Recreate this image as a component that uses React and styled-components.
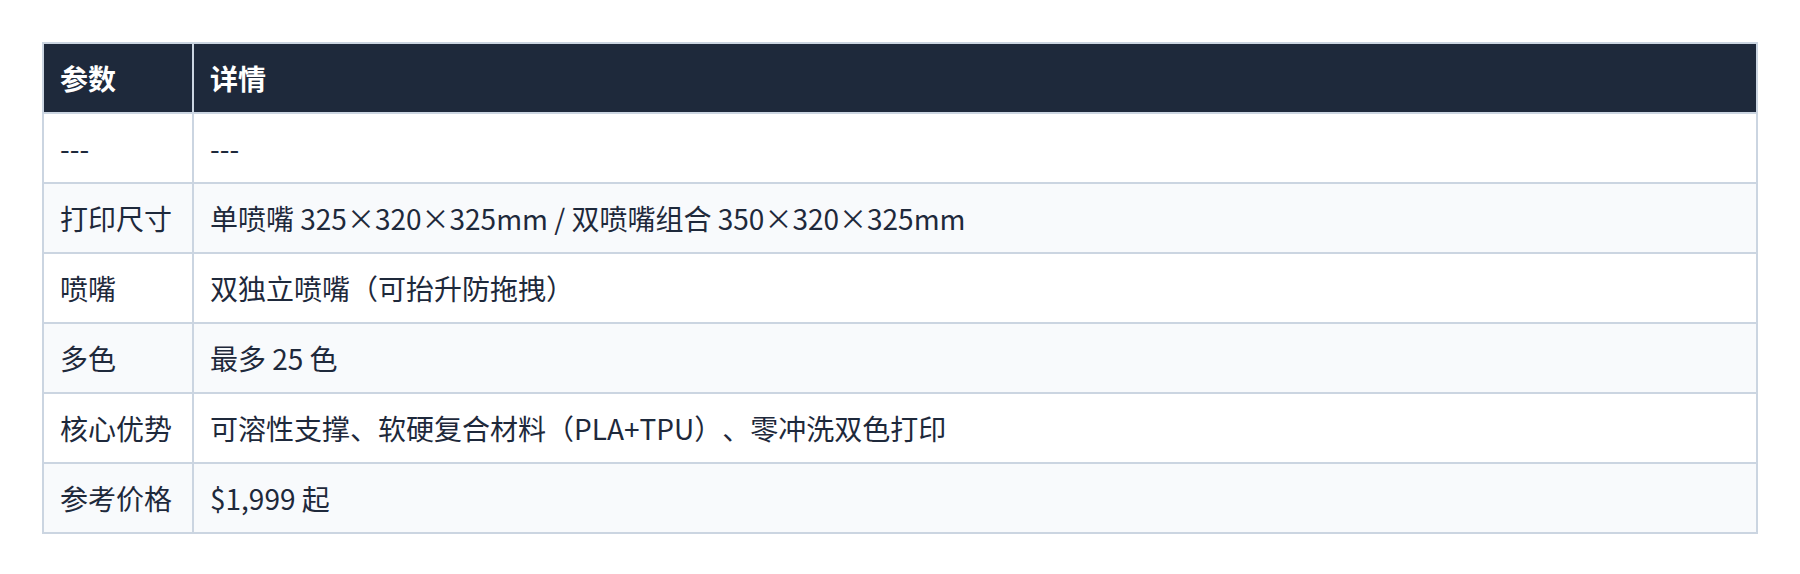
//Libraries
import React from 'react'
import styled, { createGlobalStyle } from 'styled-components'


const GlobalStyle = createGlobalStyle`
    html, body {
        margin: 0;
        padding: 0;
        background: #ffffff;
    }
    body {
        font-family: "Noto Sans CJK SC", "Noto Sans", sans-serif;
        color: #1e293b;
    }
`

const rows = [
    ['---', '---'],
    ['打印尺寸', '单喷嘴 325×320×325mm / 双喷嘴组合 350×320×325mm'],
    ['喷嘴', '双独立喷嘴（可抬升防拖拽）'],
    ['多色', '最多 25 色'],
    ['核心优势', '可溶性支撑、软硬复合材料（PLA+TPU）、零冲洗双色打印'],
    ['参考价格', '$1,999 起'],
]


const App = () => {
    return (
        <Page>
            <GlobalStyle />
            <Table>
                <thead>
                    <tr>
                        <HeadCell first>参数</HeadCell>
                        <HeadCell>详情</HeadCell>
                    </tr>
                </thead>
                <tbody>
                    {rows.map((row, i) => (
                        <Row key={i} striped={i % 2 === 1}>
                            <Cell first>{row[0]}</Cell>
                            <Cell>{row[1]}</Cell>
                        </Row>
                    ))}
                </tbody>
            </Table>
        </Page>
    )
}


const Page = styled.div`
    padding: 42px;
    width: 1800px;
    box-sizing: border-box;
`

const Table = styled.table`
    width: 100%;
    border-collapse: separate;
    border-spacing: 0;
    border: 2px solid #cbd5e1;
    table-layout: fixed;
    font-size: 28px;
    line-height: 40px;
    text-spacing-trim: space-all;
`

const HeadCell = styled.th`
    background: #1e293b;
    color: #ffffff;
    font-weight: 700;
    text-align: left;
    padding: 12px 16px;
    height: 68px;
    box-sizing: border-box;
    width: ${props => props.first ? '150px' : 'auto'};
    border-right: ${props => props.first ? '2px solid #cbd5e1' : 'none'};
`

const Row = styled.tr`
    background: ${props => props.striped ? '#f8fafc' : '#ffffff'};
`

const Cell = styled.td`
    padding: 12px 16px;
    height: 70px;
    box-sizing: border-box;
    vertical-align: middle;
    border-top: 2px solid #cbd5e1;
    border-right: ${props => props.first ? '2px solid #cbd5e1' : 'none'};
    white-space: nowrap;
`


export default App
